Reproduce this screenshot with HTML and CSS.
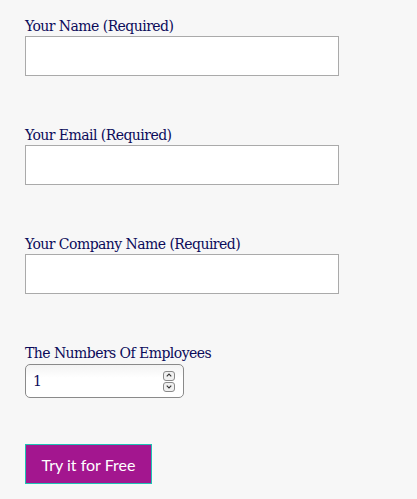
FILE: index.html
```html
<!DOCTYPE html>
<html>
<head>
<meta charset="utf-8">
<link rel="stylesheet" href="styles.css">
</head>
<body>
<form class="form">
  <div class="field">
    <label class="label">Your Name (Required)</label>
    <input class="text" type="text">
  </div>
  <div class="field">
    <label class="label">Your Email (Required)</label>
    <input class="text" type="text">
  </div>
  <div class="field">
    <label class="label">Your Company Name (Required)</label>
    <input class="text" type="text">
  </div>
  <div class="field field-num">
    <label class="label">The Numbers Of Employees</label>
    <div class="num">
      <input class="num-input" type="text" value="1">
      <div class="spin">
        <span class="spin-btn"><svg width="11" height="9" viewBox="0 0 11 9"><path d="M3 5.5 L5.5 3 L8 5.5" fill="none" stroke="#333" stroke-width="1.2"/></svg></span>
        <span class="spin-btn"><svg width="11" height="9" viewBox="0 0 11 9"><path d="M3 3.5 L5.5 6 L8 3.5" fill="none" stroke="#333" stroke-width="1.2"/></svg></span>
      </div>
    </div>
  </div>
  <button class="btn" type="button">Try it for Free</button>
</form>
</body>
</html>
```
FILE: styles.css
```css
html, body {
  margin: 0;
  padding: 0;
  background: #f7f7f7;
}
.form {
  padding: 16px 0 0 25px;
  display: flex;
  flex-direction: column;
  align-items: flex-start;
}
.field {
  display: flex;
  flex-direction: column;
  margin-bottom: 49px;
}
.label {
  font-family: "DejaVu Serif", serif;
  font-size: 14px;
  line-height: 20px;
  color: #0b0b5a;
  letter-spacing: -0.55px;
}
.text {
  box-sizing: border-box;
  width: 314px;
  height: 40px;
  margin: 0;
  border: 1px solid #aaaaaa;
  background: #ffffff;
  outline: none;
  padding: 0 8px;
}
.field-num {
  margin-bottom: 46px;
}
.num {
  box-sizing: border-box;
  margin-top: 1px;
  width: 159px;
  height: 34px;
  border: 1px solid #8a8a8a;
  border-radius: 5px;
  background: linear-gradient(#f3f3f3, #ffffff 40%, #ffffff);
  display: flex;
  align-items: center;
  padding: 0 8px 0 7px;
}
.num-input {
  flex: 1;
  min-width: 0;
  border: none;
  background: transparent;
  outline: none;
  padding: 0;
  font-family: "DejaVu Serif", serif;
  font-size: 14px;
  color: #0b0b5a;
}
.spin {
  display: flex;
  flex-direction: column;
  gap: 1px;
}
.spin-btn {
  box-sizing: border-box;
  width: 12px;
  height: 10px;
  border: 1px solid #8a8a8a;
  border-radius: 3px;
  background: #f0f0f0;
  display: flex;
  align-items: center;
  justify-content: center;
}
.spin-btn svg {
  display: block;
}
.btn {
  -webkit-appearance: none;
  appearance: none;
  box-sizing: border-box;
  width: 127px;
  height: 40px;
  margin: 0;
  border: 1px solid #1fc2b3;
  border-radius: 0;
  background: #a3168f;
  color: #ffffff;
  font-family: "Lato", "Open Sans", sans-serif;
  font-size: 16px;
  font-weight: 400;
  padding: 0;
  cursor: pointer;
}
```
